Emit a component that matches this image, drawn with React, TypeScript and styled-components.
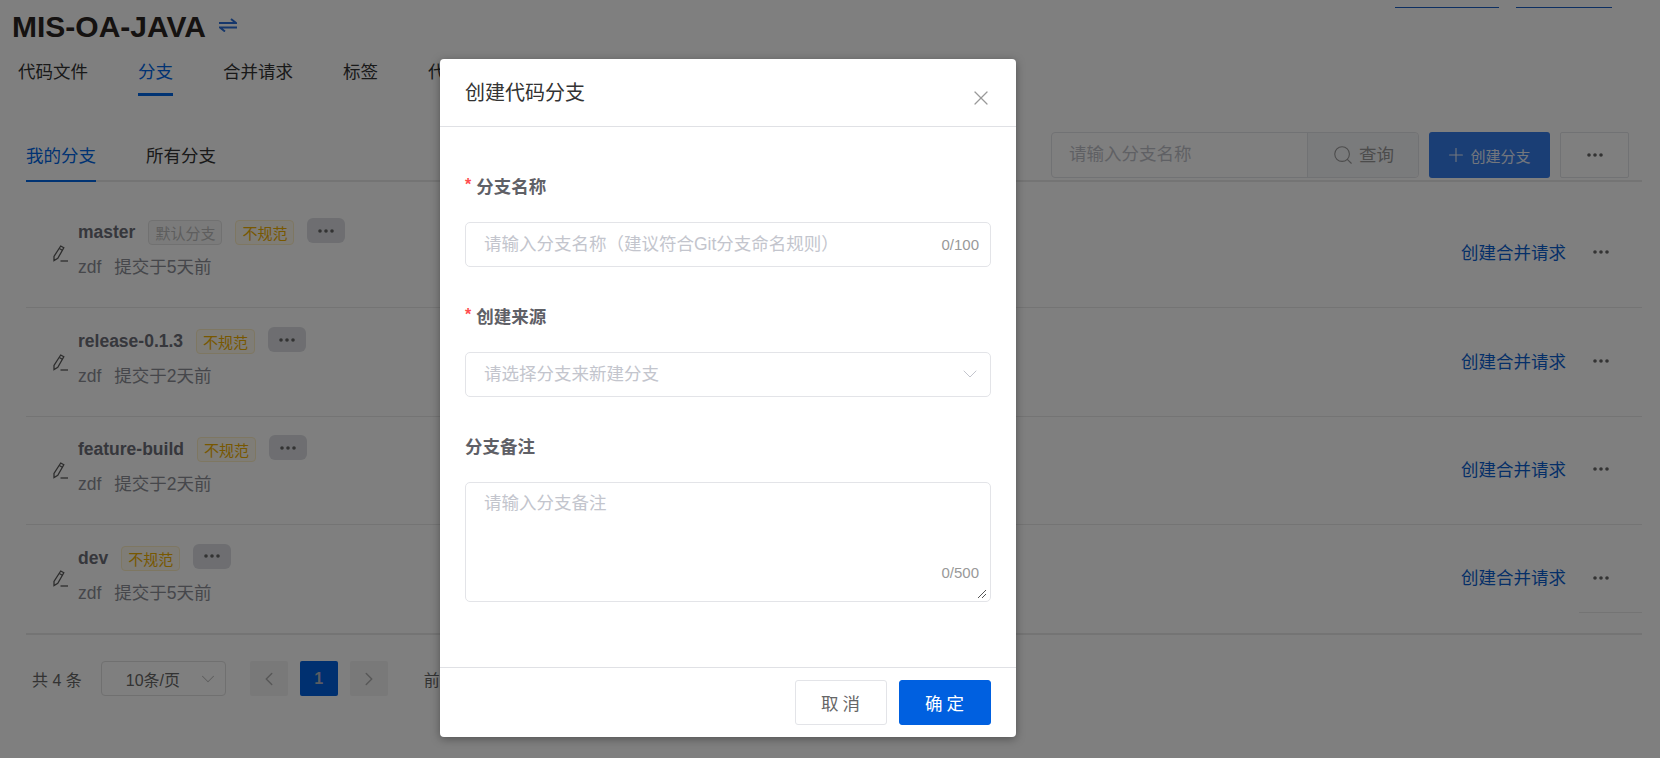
import styled, { createGlobalStyle } from "styled-components"
import { ChevronDown, ChevronLeft, ChevronRight, Plus, Search, X } from "lucide-react"

const GlobalStyle = createGlobalStyle`
  html, body {
    margin: 0;
    padding: 0;
    background: #fff;
  }
  * {
    box-sizing: border-box;
  }
  body {
    font-family: "Liberation Sans", "Noto Sans CJK SC", sans-serif;
    font-size: 17.5px;
    color: #333;
  }
`

const Page = styled.div`
  position: relative;
  width: 1660px;
  height: 758px;
  overflow: hidden;
`

const Header = styled.div`
  height: 48px;
  padding: 6px 0 0 12px;
  position: relative;
  display: flex;
  align-items: center;
  gap: 13px;
`

const Title = styled.h1`
  margin: 0;
  font-size: 30px;
  line-height: 36px;
  font-weight: 700;
  color: #2a2522;
`

const SwapWrap = styled.span`
  display: flex;
  margin-top: -4px;
`

const TopLinks = styled.div`
  position: absolute;
  top: 7px;
  left: 1395px;
  display: flex;
  gap: 17px;
`

const TopLink = styled.div<{ $width: number }>`
  width: ${(p) => p.$width}px;
  height: 1px;
  background: #1a5fc4;
`

const NavTabs = styled.div`
  display: flex;
  gap: 50px;
  padding-left: 18px;
  height: 48px;
`

const NavTab = styled.div<{ $active?: boolean }>`
  line-height: 26px;
  padding-top: 11px;
  height: 48px;
  color: ${(p) => (p.$active ? "#0066e6" : "#333")};
  border-bottom: 3px solid ${(p) => (p.$active ? "#0066e6" : "transparent")};
`

const Toolbar = styled.div`
  margin: 36px 18px 0 26px;
  height: 50px;
  border-bottom: 2px solid #e8e8e8;
  display: flex;
  justify-content: space-between;
`

const SubTabs = styled.div`
  display: flex;
  gap: 50px;
`

const SubTab = styled.div<{ $active?: boolean }>`
  line-height: 26px;
  padding-top: 11px;
  height: 50px;
  color: ${(p) => (p.$active ? "#0066e6" : "#333")};
  border-bottom: 2px solid ${(p) => (p.$active ? "#0066e6" : "transparent")};
`

const Actions = styled.div`
  display: flex;
  gap: 10px;
  height: 46px;
  margin-right: 13px;
`

const SearchGroup = styled.div`
  display: flex;
  width: 368px;
  height: 46px;
  border: 1px solid #e3e4e8;
  border-radius: 4px;
`

const SearchInput = styled.div`
  width: 255px;
  padding-left: 17px;
  line-height: 42px;
  color: #bfc1c8;
`

const SearchButton = styled.div`
  flex: 1;
  display: flex;
  align-items: center;
  justify-content: center;
  gap: 5px;
  line-height: 40px;
  color: #999;
  background: #f5f6f8;
  border-left: 1px solid #e3e4e8;
  border-radius: 0 4px 4px 0;
`

const CreateButton = styled.div`
  width: 121px;
  display: flex;
  align-items: center;
  justify-content: center;
  gap: 3px;
  padding-right: 3px;
  font-size: 15px;
  color: #e8eefa;
  background: #347cea;
  border-radius: 3px;
`

const MoreBox = styled.div`
  width: 69px;
  display: flex;
  align-items: center;
  justify-content: center;
  border: 1px solid #e3e4e8;
  border-radius: 2px;
`

const List = styled.div`
  margin: 17px 18px 0 26px;
  border-bottom: 2px solid #e8e8e8;
`

const Row = styled.div`
  height: 108.4px;
  display: flex;
  align-items: center;
  padding-left: 26px;
  position: relative;
  & + & {
    border-top: 1px solid #e8e8e8;
  }
`

const RowBody = styled.div`
  margin-left: 10px;
  margin-bottom: 6px;
  flex: 1;
`

const NameLine = styled.div`
  display: flex;
  align-items: center;
  gap: 13px;
  height: 25px;
`

const Name = styled.span`
  font-weight: 700;
  color: #6c6e78;
  line-height: 25px;
`

const Tag = styled.span<{ $warn?: boolean }>`
  height: 25px;
  padding: 0 6px;
  display: flex;
  align-items: center;
  font-size: 15px;
  border-radius: 4px;
  border: 1px solid ${(p) => (p.$warn ? "#fdeec4" : "#e3e3e3")};
  background: ${(p) => (p.$warn ? "#fffaee" : "#f6f6f6")};
  color: ${(p) => (p.$warn ? "#f0b000" : "#bcbcbc")};
`

const DotsButton = styled.span`
  width: 38px;
  height: 25px;
  margin-bottom: 4px;
  display: flex;
  align-items: center;
  justify-content: center;
  background: #dcdde2;
  border-radius: 6px;
`

const SubLine = styled.div`
  display: flex;
  gap: 13px;
  margin-top: 10px;
  color: #8c8e96;
  line-height: 25px;
`

const MergeLink = styled.span`
  color: #0b5fd0;
  margin-right: 27px;
  margin-bottom: 4px;
`

const RowMore = styled.span`
  width: 16px;
  margin-right: 33px;
  margin-bottom: 2px;
  display: flex;
`

const StrayLine = styled.div`
  position: absolute;
  right: 0;
  bottom: 20px;
  width: 63px;
  height: 1px;
  background: #e8e8e8;
`

const Pager = styled.div`
  display: flex;
  align-items: center;
  height: 36px;
  margin: 26px 0 0 32px;
  font-size: 16px;
  color: #666;
`

const PageSize = styled.div`
  width: 125px;
  height: 35px;
  margin-left: 19px;
  padding: 0 6px 0 24px;
  display: flex;
  align-items: center;
  justify-content: space-between;
  border: 1px solid #e0e0e0;
  border-radius: 4px;
`

const PageButton = styled.div<{ $active?: boolean }>`
  width: 38px;
  height: 35px;
  display: flex;
  align-items: center;
  justify-content: center;
  border-radius: 2px;
  font-weight: 700;
  color: ${(p) => (p.$active ? "#b3b8c4" : "#b0b0b0")};
  background: ${(p) => (p.$active ? "#0060e0" : "#f2f2f2")};
`

const PageButtons = styled.div`
  display: flex;
  gap: 12px;
  margin-left: 24px;
  margin-right: 36px;
`

const Overlay = styled.div`
  position: absolute;
  inset: 0;
  background: rgba(0, 0, 0, 0.5);
  display: flex;
  padding: 59px 0 0 440px;
`

const Modal = styled.div`
  width: 576px;
  height: 678px;
  display: flex;
  flex-direction: column;
  background: #fff;
  border-radius: 4px;
  box-shadow: 0 2px 10px rgba(0, 0, 0, 0.35);
`

const ModalHeader = styled.div`
  height: 68px;
  flex: none;
  display: flex;
  justify-content: space-between;
  padding: 20px 23px 0 25px;
  border-bottom: 1px solid #e0e1e5;
`

const ModalTitle = styled.div`
  font-size: 20px;
  line-height: 28px;
  color: #333;
`

const CloseButton = styled.span`
  display: flex;
  margin-top: 7px;
  height: 24px;
  color: #999;
`

const ModalBody = styled.div`
  flex: 1;
  padding: 45px 25px 0;
`

const Field = styled.div`
  margin-bottom: 35px;
`

const FieldLabel = styled.div`
  display: flex;
  align-items: center;
  gap: 5px;
  height: 26px;
  font-weight: 700;
  color: #5f6066;
  margin-bottom: 24px;
`

const Required = styled.span`
  color: #ff4d4f;
  font-size: 16px;
`

const InputBox = styled.div<{ $height?: number }>`
  position: relative;
  height: ${(p) => p.$height ?? 45}px;
  padding: ${(p) => (p.$height ? "7px" : "0")} 40px 0 18px;
  line-height: ${(p) => (p.$height ? "27px" : "43px")};
  display: ${(p) => (p.$height ? "block" : "flex")};
  align-items: center;
  justify-content: space-between;
  border: 1px solid #e3e4e8;
  border-radius: 5px;
  color: #c3c5cd;
`

const Counter = styled.span<{ $bottom?: number }>`
  position: absolute;
  right: 11px;
  ${(p) => (p.$bottom ? `bottom: ${p.$bottom}px;` : "")}
  font-size: 15px;
  line-height: 20px;
  color: #999;
`

const Chevron = styled.span`
  position: absolute;
  right: 8px;
  top: 9px;
  display: flex;
  color: #c3c5cd;
`

const Resizer = styled.svg`
  position: absolute;
  right: 3px;
  bottom: 2px;
`

const ModalFooter = styled.div`
  height: 70px;
  flex: none;
  display: flex;
  justify-content: flex-end;
  gap: 12px;
  padding: 12px 25px 0 0;
  border-top: 1px solid #e0e1e5;
`

const FooterButton = styled.div<{ $primary?: boolean }>`
  width: 92px;
  height: 45px;
  display: flex;
  align-items: center;
  justify-content: center;
  letter-spacing: 4px;
  padding-left: 3px;
  border-radius: 3px;
  color: ${(p) => (p.$primary ? "#fff" : "#666")};
  background: ${(p) => (p.$primary ? "#0060e0" : "#fff")};
  border: 1px solid ${(p) => (p.$primary ? "#0060e0" : "#e3e4e8")};
`

const Dots = () => (
  <svg width="16" height="4" viewBox="0 0 16 4">
    <circle cx="2" cy="2" r="1.8" fill="#666" />
    <circle cx="8" cy="2" r="1.8" fill="#666" />
    <circle cx="14" cy="2" r="1.8" fill="#666" />
  </svg>
)

const PencilIcon = () => (
  <svg width="16" height="17" viewBox="0 0 16 17" fill="none" stroke="#5a5a5a" strokeWidth="1.3">
    <path d="M8.7 1 L11.8 2.7 L5.8 13.4 L2 15.6 L2 11.4 Z" />
    <path d="M7.3 3.5 L10.4 5.2" />
    <path d="M8.5 16 H16" />
  </svg>
)

const SwapIcon = () => (
  <svg width="18" height="14" viewBox="0 0 18 14" fill="none" stroke="#2c6fd8" strokeWidth="2">
    <path d="M0 5 H17 L12 1" />
    <path d="M18 9.5 H1 L6 13.5" />
  </svg>
)

const branches = [
  { name: "master", isDefault: true, time: "提交于5天前" },
  { name: "release-0.1.3", time: "提交于2天前" },
  { name: "feature-build", time: "提交于2天前" },
  { name: "dev", time: "提交于5天前" },
]

export default function App() {
  return (
    <Page>
      <GlobalStyle />
      <Header>
        <Title>MIS-OA-JAVA</Title>
        <SwapWrap>
          <SwapIcon />
        </SwapWrap>
        <TopLinks>
          <TopLink $width={104} />
          <TopLink $width={96} />
        </TopLinks>
      </Header>
      <NavTabs>
        <NavTab>代码文件</NavTab>
        <NavTab $active>分支</NavTab>
        <NavTab>合并请求</NavTab>
        <NavTab>标签</NavTab>
        <NavTab>代码评审</NavTab>
      </NavTabs>
      <Toolbar>
        <SubTabs>
          <SubTab $active>我的分支</SubTab>
          <SubTab>所有分支</SubTab>
        </SubTabs>
        <Actions>
          <SearchGroup>
            <SearchInput>请输入分支名称</SearchInput>
            <SearchButton>
              <Search size={22} strokeWidth={1.2} />
              查询
            </SearchButton>
          </SearchGroup>
          <CreateButton>
            <Plus size={22} strokeWidth={1.2} />
            创建分支
          </CreateButton>
          <MoreBox>
            <Dots />
          </MoreBox>
        </Actions>
      </Toolbar>
      <List>
        {branches.map((b, i) => (
          <Row key={b.name}>
            <PencilIcon />
            <RowBody>
              <NameLine>
                <Name>{b.name}</Name>
                {b.isDefault && <Tag>默认分支</Tag>}
                <Tag $warn>不规范</Tag>
                <DotsButton>
                  <Dots />
                </DotsButton>
              </NameLine>
              <SubLine>
                <span>zdf</span>
                <span>{b.time}</span>
              </SubLine>
            </RowBody>
            <MergeLink>创建合并请求</MergeLink>
            <RowMore>
              <Dots />
            </RowMore>
            {i === 3 && <StrayLine />}
          </Row>
        ))}
      </List>
      <Pager>
        共 4 条
        <PageSize>
          10条/页
          <ChevronDown size={22} strokeWidth={1.1} color="#bbb" />
        </PageSize>
        <PageButtons>
          <PageButton>
            <ChevronLeft size={22} strokeWidth={1.6} />
          </PageButton>
          <PageButton $active>1</PageButton>
          <PageButton>
            <ChevronRight size={22} strokeWidth={1.6} />
          </PageButton>
        </PageButtons>
        前往
      </Pager>
      <Overlay>
        <Modal>
          <ModalHeader>
            <ModalTitle>创建代码分支</ModalTitle>
            <CloseButton>
              <X size={24} strokeWidth={1.2} />
            </CloseButton>
          </ModalHeader>
          <ModalBody>
            <Field>
              <FieldLabel>
                <Required>*</Required>
                分支名称
              </FieldLabel>
              <InputBox>
                请输入分支名称（建议符合Git分支命名规则）
                <Counter>0/100</Counter>
              </InputBox>
            </Field>
            <Field>
              <FieldLabel>
                <Required>*</Required>
                创建来源
              </FieldLabel>
              <InputBox>
                请选择分支来新建分支
                <Chevron>
                  <ChevronDown size={24} strokeWidth={1} />
                </Chevron>
              </InputBox>
            </Field>
            <Field>
              <FieldLabel>分支备注</FieldLabel>
              <InputBox $height={120}>
                请输入分支备注
                <Counter $bottom={18}>0/500</Counter>
                <Resizer width="10" height="10" viewBox="0 0 10 10" stroke="#555" strokeWidth="1">
                  <path d="M1 9 L9 1" />
                  <path d="M5 9 L9 5" />
                </Resizer>
              </InputBox>
            </Field>
          </ModalBody>
          <ModalFooter>
            <FooterButton>取消</FooterButton>
            <FooterButton $primary>确定</FooterButton>
          </ModalFooter>
        </Modal>
      </Overlay>
    </Page>
  )
}
